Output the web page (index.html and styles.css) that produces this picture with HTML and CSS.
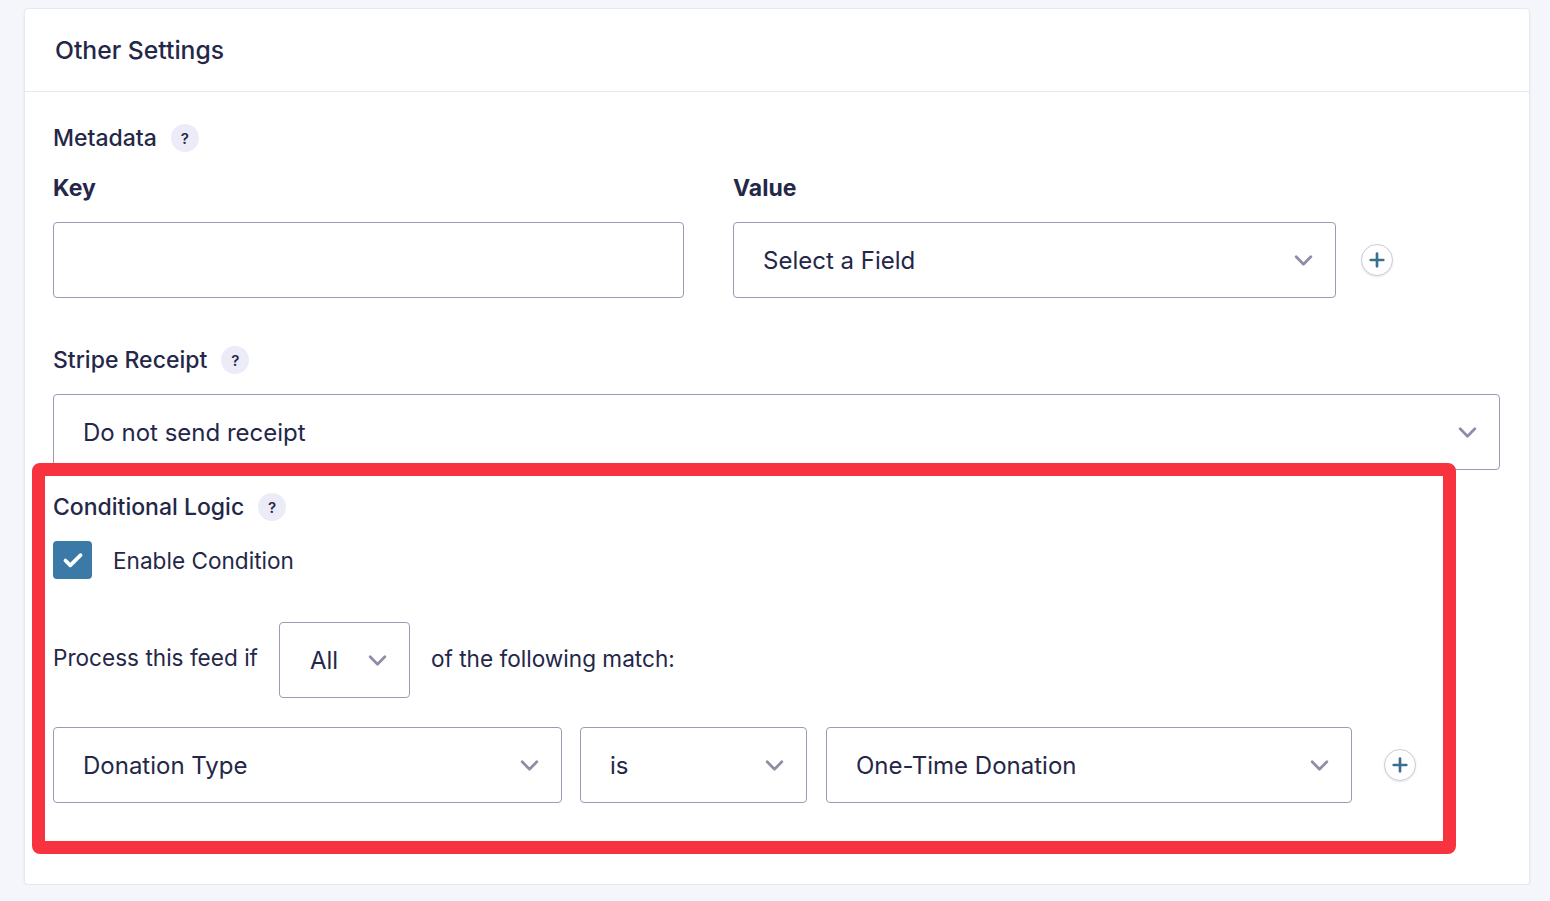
FILE: index.html
```html
<!DOCTYPE html>
<html lang="en">
<head>
    <meta charset="UTF-8">
    <meta name="viewport" content="width=device-width, initial-scale=1.0">
    <title>Other Settings</title>
    <link rel="stylesheet" href="styles.css">
</head>
<body>
    <div class="card">
        <div class="card-header">Other Settings</div>

        <div class="card-body">
            <!-- Metadata -->
            <div class="label">Metadata <span class="help">?</span></div>
            <div class="meta-grid">
                <div class="field-title">Key</div>
                <div class="field-title">Value</div>
                <div></div>
                <div class="input"></div>
                <div class="select">
                    <span>Select a Field</span>
                    <svg class="chevron" viewBox="0 0 20 12"><path d="M2 2l8 8 8-8"/></svg>
                </div>
                <div class="add-button">
                    <svg viewBox="0 0 20 20"><path d="M10 3v14M3 10h14"/></svg>
                </div>
            </div>

            <!-- Stripe Receipt -->
            <div class="label label-gap">Stripe Receipt <span class="help">?</span></div>
            <div class="select select-wide">
                <span>Do not send receipt</span>
                <svg class="chevron" viewBox="0 0 20 12"><path d="M2 2l8 8 8-8"/></svg>
            </div>

            <!-- Conditional Logic -->
            <div class="label label-cond">Conditional Logic <span class="help">?</span></div>
            <div class="checkbox-row">
                <div class="checkbox">
                    <svg viewBox="0 0 24 24"><path d="M5 12.5l4.5 4.5L19 7.5"/></svg>
                </div>
                <span>Enable Condition</span>
            </div>

            <div class="process-row">
                <span>Process this feed if</span>
                <div class="select select-all">
                    <span>All</span>
                    <svg class="chevron" viewBox="0 0 20 12"><path d="M2 2l8 8 8-8"/></svg>
                </div>
                <span>of the following match:</span>
            </div>

            <div class="rule-row">
                <div class="select rule-field">
                    <span>Donation Type</span>
                    <svg class="chevron" viewBox="0 0 20 12"><path d="M2 2l8 8 8-8"/></svg>
                </div>
                <div class="select rule-op">
                    <span>is</span>
                    <svg class="chevron" viewBox="0 0 20 12"><path d="M2 2l8 8 8-8"/></svg>
                </div>
                <div class="select rule-value">
                    <span>One-Time Donation</span>
                    <svg class="chevron" viewBox="0 0 20 12"><path d="M2 2l8 8 8-8"/></svg>
                </div>
                <div class="add-button">
                    <svg viewBox="0 0 20 20"><path d="M10 3v14M3 10h14"/></svg>
                </div>
            </div>
        </div>

        <!-- красная рамка-выделение поверх блока условий -->
        <div class="highlight"></div>
    </div>
</body>
</html>
```

FILE: styles.css
```css
body {
    margin: 0;
    background: #f4f6fb;
    font-family: Inter, "Noto Sans", sans-serif;
    color: #242748;
}

.card {
    position: relative;
    margin: 8px 20px 0 24px;
    width: 1504px;
    background: #fff;
    border: 1px solid #e6e8ef;
    border-radius: 4px;
    box-shadow: 0 1px 3px rgba(30, 40, 80, 0.06);
}

.card-header {
    height: 82px;
    display: flex;
    align-items: center;
    padding: 0 30px;
    font-size: 24.7px;
    font-weight: 500;
    border-bottom: 1px solid #e6e8ef;
}

.card-body {
    padding: 32px 29px 81px 28px;
}

.label {
    display: flex;
    align-items: center;
    height: 28px;
    font-size: 23px;
    font-weight: 500;
}

.label-gap {
    margin-top: 48px;
}

.label-cond {
    margin-top: 23px;
}

.help {
    display: inline-flex;
    align-items: center;
    justify-content: center;
    width: 28px;
    height: 28px;
    margin-left: 14px;
    border-radius: 50%;
    background: #ececf8;
    font-size: 15px;
    font-weight: 600;
}

.meta-grid {
    display: grid;
    grid-template-columns: 631px 603px 32px;
    column-gap: 49px;
    row-gap: 20px;
    align-items: center;
    margin-top: 22px;
}

.meta-grid .add-button {
    margin-left: -24px;
}

.field-title {
    font-size: 23px;
    font-weight: 700;
    line-height: 28px;
}

.input,
.select {
    box-sizing: border-box;
    height: 76px;
    border: 1px solid #9d9bb3;
    border-radius: 4px;
    background: #fff;
}

.select {
    display: flex;
    align-items: center;
    justify-content: space-between;
    padding: 0 22px 0 29px;
    font-size: 24px;
}

.chevron {
    width: 19px;
    height: 11px;
    fill: none;
    stroke: #8f8da7;
    stroke-width: 3;
    stroke-linecap: round;
    stroke-linejoin: round;
}

.select-wide {
    margin-top: 20px;
}

.add-button {
    box-sizing: border-box;
    width: 32px;
    height: 32px;
    border: 1px solid #cbccd9;
    border-radius: 50%;
    background: #fff;
    box-shadow: 0 1px 2px rgba(30, 40, 80, 0.12);
    display: flex;
    align-items: center;
    justify-content: center;
}

.add-button svg {
    width: 18px;
    height: 18px;
    fill: none;
    stroke: #3a6f92;
    stroke-width: 3;
    stroke-linecap: round;
}

.checkbox-row {
    display: flex;
    align-items: center;
    gap: 21px;
    margin-top: 20px;
    font-size: 22.6px;
}

.checkbox {
    width: 39px;
    height: 38px;
    border-radius: 4px;
    background: #3b7aa6;
    display: flex;
    align-items: center;
    justify-content: center;
}

.checkbox svg {
    width: 26px;
    height: 26px;
    fill: none;
    stroke: #fff;
    stroke-width: 3.4;
    stroke-linecap: round;
    stroke-linejoin: round;
}

.process-row {
    display: flex;
    align-items: center;
    gap: 21px;
    margin-top: 43px;
    font-size: 22.6px;
}

.process-row > span:first-child {
    margin-top: -6px;
}

.process-row > span:last-child {
    margin-top: -4px;
}

.select-all {
    width: 131px;
    height: 76px;
    padding: 0 22px 0 30px;
}

.rule-row {
    display: flex;
    align-items: center;
    margin-top: 29px;
}

.rule-field {
    width: 509px;
}

.rule-op {
    width: 227px;
    margin-left: 18px;
}

.rule-value {
    width: 526px;
    margin-left: 19px;
}

.rule-row .add-button {
    margin-left: 32px;
}

.highlight {
    position: absolute;
    left: 7px;
    top: 454px;
    width: 1424px;
    height: 391px;
    box-sizing: border-box;
    border: 13px solid #f7333f;
    border-radius: 8px;
    pointer-events: none;
}
```
